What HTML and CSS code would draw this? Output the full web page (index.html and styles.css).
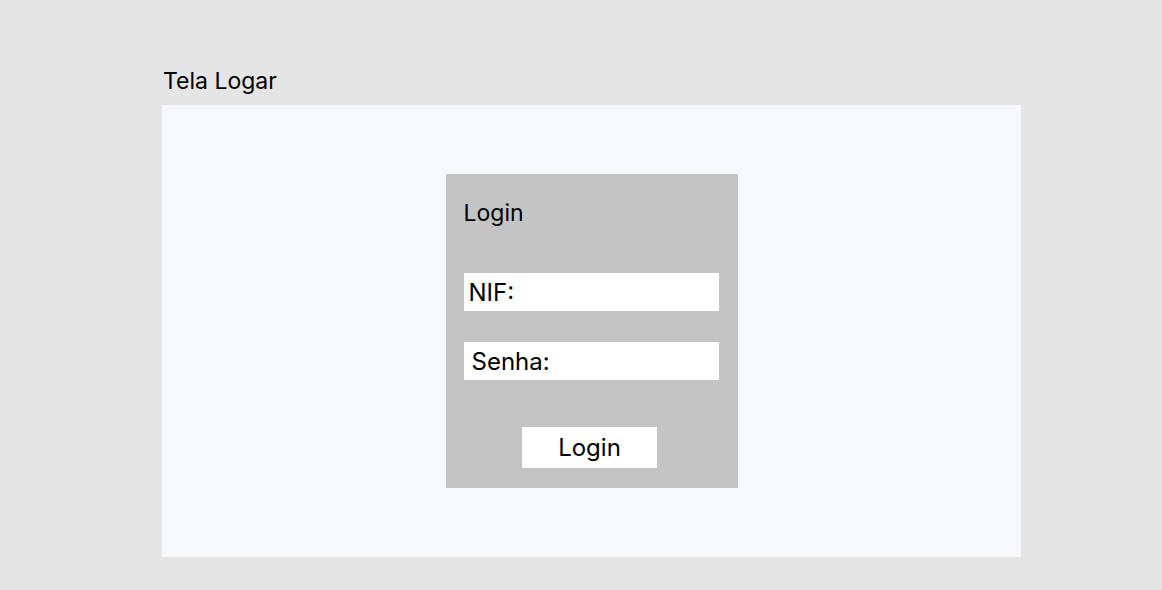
FILE: index.html
```html
<!DOCTYPE html>
<html lang="pt">
<head>
<meta charset="utf-8">
<title>Tela Logar</title>
<link rel="stylesheet" href="styles.css">
</head>
<body>
<main class="page">
  <h1 class="page-title">Tela Logar</h1>
  <section class="frame">
    <form class="card">
      <h2 class="card-title">Login</h2>
      <div class="field field-nif">NIF:</div>
      <div class="field field-senha">Senha:</div>
      <div class="actions"><div class="btn">Login</div></div>
    </form>
  </section>
</main>
</body>
</html>
```
FILE: styles.css
```css
html, body {
  margin: 0;
  padding: 0;
  background: #e5e5e5;
  font-family: Inter, "Noto Sans", sans-serif;
  color: #000;
}
.page {
  width: 1162px;
  height: 590px;
  box-sizing: border-box;
  padding: 66px 0 0 162px;
}
.page-title {
  margin: 0 0 0 1px;
  font-size: 23px;
  font-weight: 400;
  line-height: 30px;
  height: 39px;
  letter-spacing: 0;
}
.frame {
  width: 859px;
  height: 452px;
  background: #f7f8fa;
  display: flex;
  align-items: center;
  justify-content: center;
}
.card {
  width: 292px;
  height: 314px;
  box-sizing: border-box;
  background: #c4c4c4;
  padding: 24px 18px 0 18px;
  display: flex;
  flex-direction: column;
}
.card-title {
  margin: 0;
  font-size: 23px;
  font-weight: 400;
  line-height: 30px;
  height: 75px;
}
.field {
  width: 255px;
  height: 38px;
  background: #fff;
  box-sizing: border-box;
  font-size: 24px;
  line-height: 39px;
  padding-left: 5px;
}
.field-senha {
  margin-top: 31px;
  padding-left: 8px;
}
.actions {
  display: flex;
  justify-content: center;
  margin-top: 47px;
  padding-right: 4px;
}
.btn {
  width: 135px;
  height: 41px;
  background: #fff;
  font-size: 24px;
  line-height: 41px;
  text-align: center;
}
```
